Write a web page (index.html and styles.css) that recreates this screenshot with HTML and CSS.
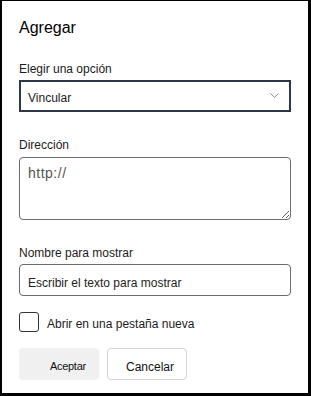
FILE: index.html
```html
<!DOCTYPE html>
<html lang="es">
<head>
  <meta charset="UTF-8">
  <title>Agregar</title>
  <link rel="stylesheet" href="styles.css">
</head>
<body>

  <div class="panel">
    <h2>Agregar</h2>

    <form id="link-form">
      <label class="field-label first">Elegir una opción</label>
      <div class="select-box">
        <span>Vincular</span>
        <svg class="chevron" width="9" height="5" viewBox="0 0 9 5">
          <path d="M0.5 0.5 L4.5 4.3 L8.5 0.5" fill="none" stroke="#8a8a8a" stroke-width="1"/>
        </svg>
      </div>

      <label class="field-label" for="address">Dirección</label>
      <textarea id="address" placeholder="http://"></textarea>

      <label class="field-label" for="display-name">Nombre para mostrar</label>
      <input type="text" id="display-name" placeholder="Escribir el texto para mostrar">

      <div class="check-row">
        <span class="check-box"></span>
        <span class="check-text">Abrir en una pestaña nueva</span>
      </div>

      <div class="actions">
        <button type="submit" class="ok-btn">Aceptar</button>
        <button type="button" class="cancel-btn">Cancelar</button>
      </div>
    </form>
  </div>

</body>
</html>
```

FILE: styles.css
```css
html, body {
  margin: 0;
  padding: 0;
}

body {
  font-family: "Liberation Sans", Arial, sans-serif;
  color: #1b1b1b;
  background: #fff;
}

.panel {
  box-sizing: border-box;
  width: 311px;
  height: 396px;
  border-top: 1px solid #000;
  border-left: 2px solid #000;
  border-right: 3px solid #000;
  border-bottom: 3px solid #000;
  padding: 17px 0 0 17px;
}

h2 {
  margin: 0;
  font-size: 16px;
  line-height: 20px;
  font-weight: normal;
  color: #000;
}

.field-label {
  display: block;
  font-size: 12px;
  line-height: 16px;
  margin-top: 25px;
}

.field-label.first {
  margin-top: 23px;
}

.select-box {
  box-sizing: border-box;
  width: 272px;
  height: 32px;
  margin-top: 3px;
  border: 2px solid #2e3649;
  padding: 3px 10px 0 7px;
  display: flex;
  justify-content: space-between;
  align-items: center;
  font-size: 12px;
  line-height: 26px;
}

.chevron {
  margin-top: -5px;
}

textarea {
  display: block;
  box-sizing: border-box;
  width: 272px;
  height: 63px;
  margin: 4px 0 0;
  padding: 7px 8px;
  border: 1px solid #6b6b6b;
  border-radius: 4px;
  font-family: "Liberation Sans", Arial, sans-serif;
  font-size: 14px;
  letter-spacing: 0.5px;
  line-height: 16px;
}

textarea::placeholder {
  color: #555;
}

input[type="text"] {
  display: block;
  box-sizing: border-box;
  width: 272px;
  height: 32px;
  margin: 3px 0 0;
  padding: 7px 8px 1px;
  border: 1px solid #6b6b6b;
  border-radius: 4px;
  font-family: "Liberation Sans", Arial, sans-serif;
  font-size: 12px;
}

input[type="text"]::placeholder {
  color: #222;
}

.check-row {
  display: flex;
  align-items: flex-start;
  margin-top: 16px;
}

.check-box {
  box-sizing: border-box;
  width: 20px;
  height: 20px;
  border: 1px solid #333;
  border-radius: 3px;
}

.check-text {
  font-size: 12px;
  line-height: 16px;
  margin: 4px 0 0 8px;
}

.actions {
  display: flex;
  gap: 8px;
  margin-top: 16px;
}

button {
  box-sizing: border-box;
  width: 80px;
  height: 32px;
  border-radius: 4px;
  font-family: "Liberation Sans", Arial, sans-serif;
  color: #111;
  text-align: left;
  line-height: 16px;
  cursor: pointer;
}

.ok-btn {
  background: #f0f0f0;
  border: none;
  font-size: 11px;
  padding: 4px 0 0 31px;
  letter-spacing: -0.3px;
}

.cancel-btn {
  background: #fff;
  border: 1px solid #d4d4d4;
  font-size: 12px;
  padding: 6px 0 0 18px;
}
```
